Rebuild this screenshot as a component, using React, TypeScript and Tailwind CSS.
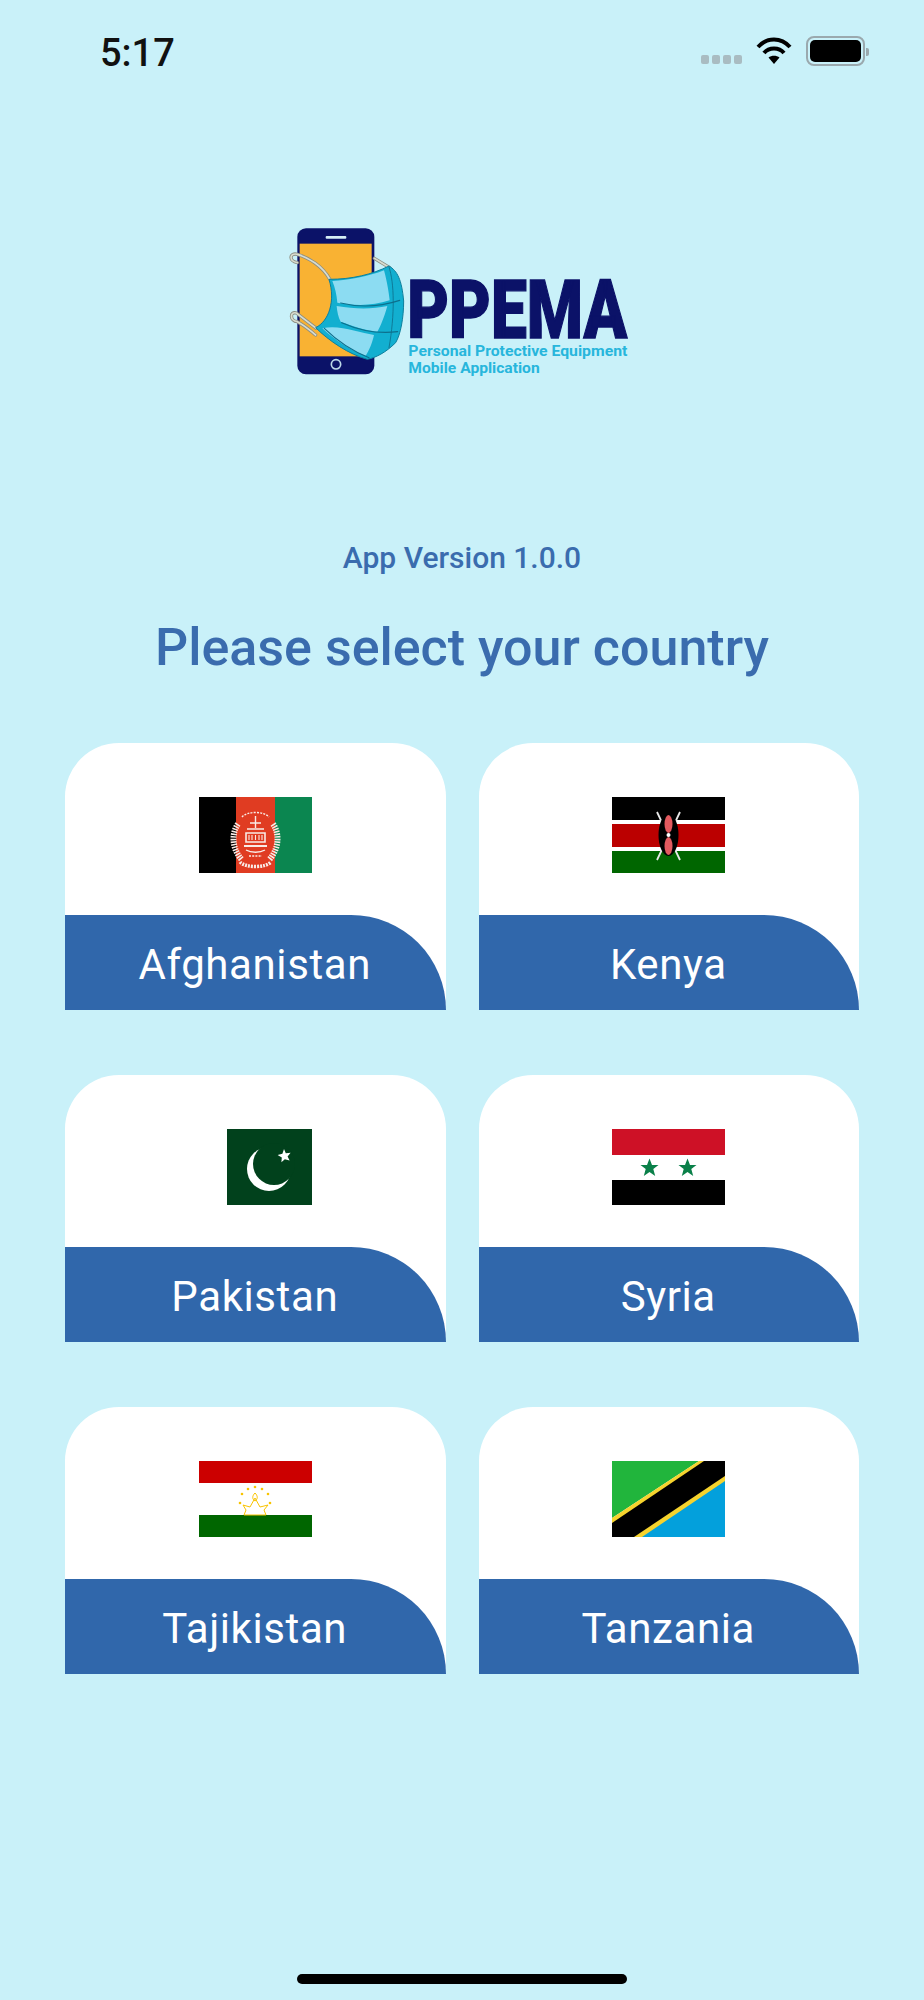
import React from "react";

const FLAG_W = "w-[113px] h-[76px]";

function Afghanistan() {
  return (
    <svg viewBox="0 0 113 76" className={FLAG_W}>
      <rect width="37" height="76" fill="#000" />
      <rect x="37" width="39" height="76" fill="#e03c22" />
      <rect x="76" width="37" height="76" fill="#0b8650" />
      <g fill="none" stroke="#f9ebe6">
        <path d="M39 27 C32 37 33 52 43 63" strokeWidth="6" strokeDasharray="1.6 1" />
        <path d="M74 27 C81 37 80 52 70 63" strokeWidth="6" strokeDasharray="1.6 1" />
        <path d="M43 20 C48 14 65 14 70 20" strokeWidth="1.4" strokeDasharray="2 1.2" />
        <path d="M41 65 C46 71 67 71 72 65" strokeWidth="3.5" strokeDasharray="2 1" />
        <path d="M56.5 19 V31 M51 26 L62 26 M48 32 H65" strokeWidth="1.4" />
        <path d="M47 36 H66 V45 H47 Z" strokeWidth="1.6" />
        <path d="M50 38 V43 M53 38 V43 M56.5 38 V43 M60 38 V43 M63 38 V43" strokeWidth="1.1" />
        <path d="M45 49 H68" strokeWidth="2" />
        <path d="M47 53 C52 56 61 56 66 53" strokeWidth="1.3" />
        <path d="M50 59 H63" strokeWidth="1.6" strokeDasharray="2 1.2" />
      </g>
    </svg>
  );
}

function Kenya() {
  return (
    <svg viewBox="0 0 113 76" className={FLAG_W}>
      <rect width="113" height="76" fill="#fff" />
      <rect width="113" height="23" fill="#000" />
      <rect y="27" width="113" height="23" fill="#bb0000" />
      <rect y="54" width="113" height="22" fill="#006600" />
      <path d="M45 15 L68 63 M68 15 L45 63" stroke="#e8e8e8" strokeWidth="1.8" />
      <ellipse cx="56.5" cy="38" rx="10" ry="21" fill="#000" />
      <ellipse cx="56.5" cy="27" rx="4" ry="9" fill="#e25a5f" />
      <ellipse cx="56.5" cy="49" rx="4" ry="9" fill="#e25a5f" />
      <circle cx="56.5" cy="38" r="2" fill="#fff" />
    </svg>
  );
}

function Pakistan() {
  return (
    <svg viewBox="0 0 85 76" className="w-[85px] h-[76px]">
      <rect width="85" height="76" fill="#01411c" />
      <circle cx="42" cy="40" r="22" fill="#fff" />
      <circle cx="47" cy="35" r="21" fill="#01411c" />
      <path
        d="M57 20 L58.8 24.2 L63.6 23.8 L60.6 27.4 L62.6 31.6 L57.8 30.2 L54.4 33.2 L54.8 28.4 L50.6 26 L55.4 24.8 Z"
        fill="#fff"
      />
    </svg>
  );
}

function Syria() {
  const star = "M0 -9.5 L2.5 -3 L9 -3 L3.8 1.1 L5.7 8 L0 4 L-5.7 8 L-3.8 1.1 L-9 -3 L-2.5 -3 Z";
  return (
    <svg viewBox="0 0 113 76" className={FLAG_W}>
      <rect width="113" height="76" fill="#fff" />
      <rect width="113" height="26" fill="#ce1126" />
      <rect y="51" width="113" height="25" fill="#000" />
      <path d={star} transform="translate(37.5 39)" fill="#0a8049" />
      <path d={star} transform="translate(75.5 39)" fill="#0a8049" />
    </svg>
  );
}

function Tajikistan() {
  const stars: [number, number][] = [
    [41, 42],
    [43, 33],
    [49, 28],
    [56, 26],
    [63, 28],
    [69, 33],
    [71, 42],
  ];
  return (
    <svg viewBox="0 0 113 76" className={FLAG_W}>
      <rect width="113" height="76" fill="#fff" />
      <rect width="113" height="22" fill="#cc0000" />
      <rect y="54" width="113" height="22" fill="#006600" />
      {stars.map(([x, y]) => (
        <circle key={x} cx={x} cy={y} r="1.3" fill="#f8c300" />
      ))}
      <g fill="none" stroke="#f8c300" strokeWidth="1">
        <path d="M56 32 C53 35 53 38 56 40 C59 38 59 35 56 32 Z" />
        <path d="M44 44 L51 46 L56 37 L61 46 L69 44 L65 49 L67 54 H45 L47 49 Z" />
      </g>
    </svg>
  );
}

function Tanzania() {
  return (
    <svg viewBox="0 0 113 76" className={FLAG_W}>
      <polygon points="0,0 87,0 0,57" fill="#21b53c" />
      <polygon points="113,18 113,76 28,76" fill="#03a0dc" />
      <polygon points="87,0 113,0 113,20 30,76 0,76 0,57" fill="#f6d32d" />
      <polygon points="92,0 113,0 113,15 22,76 0,76 0,62" fill="#000" />
    </svg>
  );
}

// Phone wearing a surgical mask, with the PPEMA wordmark beside it.
function Logo() {
  const straps = [
    "M182 204 C160 165 120 140 85 130 C62 124 58 150 85 155",
    "M142 352 C120 335 100 320 82 306 C62 300 62 330 85 332 C110 345 125 360 140 372",
    "M316 142 L362 170",
  ];
  return (
    <svg viewBox="0 0 1140 540" className="h-[180px] w-[380px]">
      <rect x="85" y="52" width="231" height="438" rx="26" fill="#0b1268" />
      <rect x="92" y="98" width="216" height="338" fill="#f9b233" />
      <rect x="170" y="75" width="62" height="8" rx="3" fill="#d5edf5" />
      <circle cx="201" cy="460" r="14" fill="none" stroke="#bcd8e8" strokeWidth="5" />

      <g fill="none" stroke="#8b8d80" strokeWidth="10" strokeLinecap="round">
        {straps.map((d) => (
          <path key={d} d={d} />
        ))}
      </g>
      <g fill="none" stroke="#d8dccf" strokeWidth="5" strokeLinecap="round">
        {straps.map((d) => (
          <path key={d} d={d} />
        ))}
      </g>

      <path
        d="M180 205 C250 205 310 190 360 165 C385 180 398 205 404 270 C404 320 395 370 380 395 C350 425 320 440 295 445 C240 430 180 390 140 350 C180 330 200 270 180 205 Z"
        fill="#12afd0"
        stroke="#0d7f9c"
        strokeWidth="3"
      />
      <path
        d="M190 210 C240 208 300 196 345 178 C355 215 360 250 362 268 C310 285 260 285 205 275 C203 250 198 230 190 210 Z"
        fill="#8cdcf2"
      />
      <path
        d="M203 285 C260 295 310 295 355 285 C345 320 335 345 325 362 C290 358 250 345 215 332 C208 320 204 300 203 285 Z"
        fill="#8cdcf2"
      />
      <path
        d="M160 352 C210 340 270 365 315 372 C310 395 300 420 290 434 C245 420 195 385 160 352 Z"
        fill="#8cdcf2"
      />
      <g fill="none" stroke="#0d6f8c" strokeWidth="3.5" strokeLinecap="round">
        <path d="M215 276 C280 292 340 285 392 268" />
        <path d="M218 335 C280 362 340 368 386 362" />
        <path d="M166 352 C210 395 250 420 300 440" />
        <path d="M360 168 C376 215 378 310 360 410" strokeWidth="2.5" />
      </g>

      <text
        x="415"
        y="380"
        textLength="660"
        lengthAdjust="spacingAndGlyphs"
        fontSize="246"
        fontWeight="900"
        fill="#0b1268"
        stroke="#0b1268"
        strokeWidth="4"
        style={{ fontFamily: "Roboto, sans-serif" }}
      >
        PPEMA
      </text>
      <text
        x="418"
        y="435"
        textLength="657"
        lengthAdjust="spacingAndGlyphs"
        fontSize="46"
        fontWeight="700"
        fill="#27b6dc"
        style={{ fontFamily: "Roboto, sans-serif" }}
      >
        Personal Protective Equipment
      </text>
      <text
        x="418"
        y="486"
        textLength="394"
        lengthAdjust="spacingAndGlyphs"
        fontSize="46"
        fontWeight="700"
        fill="#27b6dc"
        style={{ fontFamily: "Roboto, sans-serif" }}
      >
        Mobile Application
      </text>
    </svg>
  );
}

function StatusBar() {
  return (
    <div className="flex h-[106px] items-start justify-between pl-[100px] pr-[59px] pt-[31px]">
      <span className="text-[38px] font-medium leading-[44px] text-[#111]">5:17</span>
      <div className="flex items-center pt-[5px]">
        <div className="mr-[14px] mt-[17px] flex gap-[3px]">
          <span className="h-[9px] w-[8px] rounded-[2px] bg-[#a9bcc2]" />
          <span className="h-[9px] w-[8px] rounded-[2px] bg-[#a9bcc2]" />
          <span className="h-[9px] w-[8px] rounded-[2px] bg-[#a9bcc2]" />
          <span className="h-[9px] w-[8px] rounded-[2px] bg-[#a9bcc2]" />
        </div>
        <svg viewBox="0 0 36 28" className="mr-[14px] h-[28px] w-[36px]" fill="none" stroke="#000" strokeWidth="4">
          <path d="M2 10 C11 0 25 0 34 10" />
          <path d="M8 16 C13 10 23 10 28 16" />
          <path d="M18 27 L12.5 20.5 C15.5 18 20.5 18 23.5 20.5 Z" fill="#000" stroke="none" />
        </svg>
        <div className="relative flex h-[30px] w-[59px] items-center justify-center rounded-[8px] border-2 border-[#9aa9ae]">
          <div className="h-[22px] w-[51px] rounded-[5px] bg-black" />
          <span className="absolute -right-[6px] top-[10px] h-[8px] w-[3px] rounded-r-[2px] bg-[#9aa9ae]" />
        </div>
      </div>
    </div>
  );
}

function CountryCard({ name, flag }: { name: string; flag: React.ReactNode }) {
  return (
    <div className="flex h-[267px] flex-col overflow-hidden rounded-t-[54px] bg-white">
      <div className="flex h-[172px] justify-center pt-[54px]">
        <div className="flex w-[113px] justify-end">{flag}</div>
      </div>
      <div className="flex h-[95px] items-center justify-center rounded-tr-[96px] bg-[#3067ab] pr-[1px] pt-[4px]">
        <span className="text-[42px] leading-[48px] tracking-[0.6px] text-white">{name}</span>
      </div>
    </div>
  );
}

const COUNTRIES = [
  { name: "Afghanistan", flag: <Afghanistan /> },
  { name: "Kenya", flag: <Kenya /> },
  { name: "Pakistan", flag: <Pakistan /> },
  { name: "Syria", flag: <Syria /> },
  { name: "Tajikistan", flag: <Tajikistan /> },
  { name: "Tanzania", flag: <Tanzania /> },
];

export default function App() {
  return (
    <div className="flex h-[2000px] w-[924px] flex-col bg-[#c9f1f9] [font-family:Roboto,sans-serif]">
      <StatusBar />
      <div className="flex justify-center pr-[6px] pt-[105px]">
        <Logo />
      </div>
      <p className="mt-[149px] text-center text-[30px] font-medium leading-[36px] text-[#3a6cae]">App Version 1.0.0</p>
      <h1 className="mt-[42px] text-center text-[52px] font-medium leading-[60px] text-[#3a6cae]">Please select your country</h1>
      <div className="mt-[65px] grid grid-cols-2 gap-x-[33px] gap-y-[65px] px-[65px]">
        {COUNTRIES.map((c) => (
          <CountryCard key={c.name} name={c.name} flag={c.flag} />
        ))}
      </div>
      <div className="mt-auto flex justify-center pb-[16px]">
        <div className="h-[10px] w-[330px] rounded-full bg-black" />
      </div>
    </div>
  );
}
